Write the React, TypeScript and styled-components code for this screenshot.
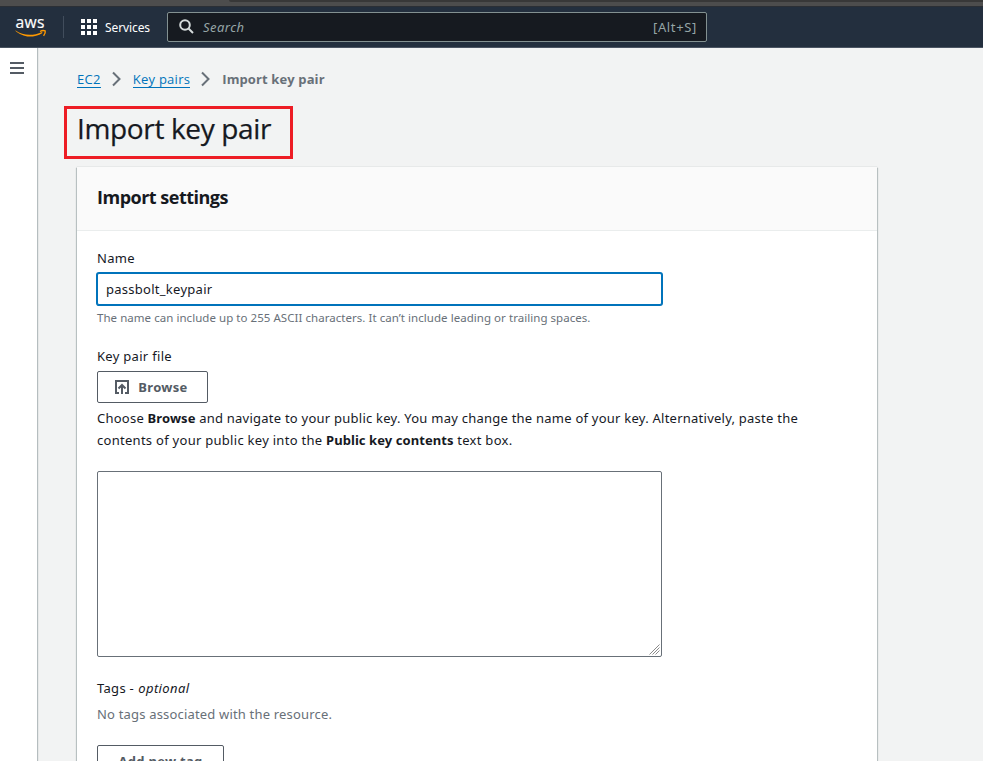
import React from 'react';
import styled, { createGlobalStyle } from 'styled-components';

const Global = createGlobalStyle`
  *, *::before, *::after { box-sizing: border-box; }
  html, body { margin: 0; height: 761px; overflow: hidden; }
  body {
    background: #f2f3f3;
    color: #16191f;
    font: 400 13px/22px "Noto Sans", "Open Sans", sans-serif;
    letter-spacing: 0.25px;
  }
  b { font-weight: 700; letter-spacing: 0.07px; }
`;

const Page = styled.div`
  width: 983px;
  height: 761px;
  display: flex;
  flex-direction: column;
  overflow: hidden;
`;

const BrowserEdge = styled.div`
  height: 7px;
  flex: none;
  background: #4d4d4d;
  border-bottom: 1px solid #2b2f35;
`;

const TabShade = styled.div`
  height: 2px;
  margin-left: 229px;
  background: #383838;
  border-bottom-left-radius: 2px;
`;

const NavBar = styled.header`
  height: 41px;
  flex: none;
  display: flex;
  align-items: center;
  padding: 0 0 1px 14px;
  background: #232f3e;
  border-bottom: 1px solid #4b5563;
  color: #fff;
`;

const NavDivider = styled.div`
  width: 1px;
  height: 22px;
  margin: 0 17px 0 15px;
  background: #414d5c;
`;

const Services = styled.div`
  display: flex;
  align-items: center;
  width: 86px;
  gap: 8px;
  font-size: 12px;
  letter-spacing: -0.1px;
`;

const ServicesLabel = styled.span`
  padding-top: 2px;
`;

const SearchBox = styled.div`
  width: 540px;
  height: 30px;
  display: flex;
  align-items: center;
  padding: 0 10px 0 11px;
  background: #161a20;
  border: 1px solid #839191;
  border-radius: 2px;
  color: #95a5a6;
`;

const SearchHint = styled.span`
  flex: 1;
  margin-left: 9px;
  font-style: italic;
  letter-spacing: 0.45px;
`;

const Shortcut = styled.span`
  letter-spacing: 0.65px;
  margin-right: -1px;
`;

const Main = styled.div`
  flex: 1;
  min-height: 0;
  display: flex;
`;

const Rail = styled.aside`
  width: 37px;
  flex: none;
  padding: 14px 0 0 10px;
  background: #fff;
  box-shadow: 1px 0 1px rgba(0, 28, 36, 0.25);
  svg { display: block; }
`;

const Content = styled.main`
  padding: 20px 0 0 40px;
`;

const Breadcrumbs = styled.nav`
  height: 22px;
  display: flex;
  align-items: center;
  font-family: "Open Sans", sans-serif;
  svg { display: block; }
`;

const Crumb = styled.a`
  height: 18px;
  line-height: 19px;
  letter-spacing: 0.27px;
  color: #0073bb;
  border-bottom: 1px solid #0073bb;
`;

const CurrentCrumb = styled.span`
  color: #687078;
  font-weight: 700;
  letter-spacing: 0.12px;
`;

const TitleFrame = styled.div`
  width: 229px;
  height: 53px;
  margin: 16px 0 8px -13px;
  padding-left: 10px;
  border: 3px solid #ed1c24;
`;

const Title = styled.h1`
  margin: 0;
  font: 400 28px/38px "Open Sans", sans-serif;
  letter-spacing: -0.35px;
  -webkit-text-stroke: 0.25px #16191f;
`;

const Card = styled.section`
  width: 800px;
  background: #fff;
  box-shadow: 0 0 1px rgba(0, 28, 36, 0.25), 1px 1px 1px rgba(0, 28, 36, 0.2), -1px 1px 1px rgba(0, 28, 36, 0.2);
`;

const CardHeader = styled.div`
  height: 64px;
  padding: 18px 20px;
  background: #fafafa;
  border-bottom: 1px solid #eaeded;
`;

const CardTitle = styled.h2`
  margin: 0;
  font: 700 18px/24px "Open Sans", sans-serif;
  letter-spacing: -0.5px;
`;

const CardBody = styled.div`
  height: 650px;
  padding: 16px 20px;
`;

const Label = styled.div`
  letter-spacing: 0.3px;
  em { margin-left: 0.5px; letter-spacing: 0.4px; }
`;

const TextInput = styled.input`
  display: block;
  width: 565px;
  height: 32px;
  margin-top: 4px;
  padding: 0 8px;
  border: 1px solid #0073bb;
  border-radius: 2px;
  box-shadow: 0 0 0 1px #0073bb;
  outline: 0;
  background: #fff;
  color: #16191f;
  font: inherit;
  letter-spacing: 0.27px;
`;

const Constraint = styled.div`
  margin: 5px 0 19px;
  color: #687078;
  font-size: 11.5px;
  line-height: 16px;
  letter-spacing: 0.045px;
`;

const Button = styled.button<{ $width: number }>`
  width: ${(p) => p.$width}px;
  height: 32px;
  display: flex;
  align-items: center;
  justify-content: center;
  gap: 8px;
  padding: 0;
  background: #fff;
  border: 1px solid #545b64;
  border-radius: 2px;
  color: #545b64;
  font: inherit;
  font-weight: 700;
  letter-spacing: 0.3px;
`;

const FileButton = styled(Button)`
  margin-top: 4px;
  padding-right: 2px;
  gap: 9px;
`;

const HelpText = styled.p`
  margin: 4px 0 20px;
`;

const HelpLine = styled.span<{ $spacing: number }>`
  display: block;
  white-space: nowrap;
  letter-spacing: ${(p) => p.$spacing}px;
`;

const KeyAreaFrame = styled.div`
  position: relative;
  width: 565px;
  margin-bottom: 20px;
`;

const KeyArea = styled.textarea`
  display: block;
  width: 100%;
  height: 186px;
  border: 1px solid #687078;
  border-radius: 2px;
  outline: 0;
  background: #fff;
  resize: none;
`;

const Grip = styled.svg`
  position: absolute;
  right: 2px;
  bottom: 2px;
`;

const EmptyTags = styled.div`
  margin: 4px 0 20px;
  color: #687078;
  letter-spacing: 0.18px;
`;

const AwsLogo = () => (
  <svg width="34" height="26" viewBox="0 0 34 26" overflow="visible" aria-label="aws">
    <text x="1.6" y="13.6" fontFamily="Open Sans, sans-serif" fontSize="16" fontWeight="500" fill="#fff" stroke="#fff" strokeWidth="0.2" textLength="29" lengthAdjust="spacingAndGlyphs">aws</text>
    <path d="M1.300 16.800C5 20 10 22.600 15.500 22.600c4.500 0 9-1.200 13-3.700l-.5-1c-4 1.900-8.300 2.900-12.500 2.900-5 0-9.500-1.500-13.900-4.400z" fill="#f90" />
    <path d="M26 17.500c1.800-1 4-1.100 5.200-.6.3 1.300-.3 3.400-1.600 5" fill="none" stroke="#f90" strokeWidth="1.400" />
  </svg>
);

const GridIcon = () => (
  <svg width="16" height="16" viewBox="0 0 16 16" fill="#fff">
    {[0, 6, 12].map((y) => [0, 6, 12].map((x) => <rect key={`${x}-${y}`} x={x} y={y} width="4" height="4" />))}
  </svg>
);

const SearchIcon = () => (
  <svg width="15" height="15" viewBox="0 0 15 15" fill="none" stroke="#d5dbdb" strokeWidth="2">
    <circle cx="6" cy="6" r="4.800" />
    <path d="M9.500 9.500L14 14" />
  </svg>
);

const Chevron = styled.svg`
  margin: 0 12px 0 11px;
  fill: none;
  stroke: #687078;
  stroke-width: 2;
`;

const Separator = () => (
  <Chevron width="9" height="16" viewBox="0 0 9 16"><path d="M1 1.500L7.500 8 1 14.500" /></Chevron>
);

export default function App() {
  return (
    <Page>
      <Global />
      <BrowserEdge><TabShade /></BrowserEdge>
      <NavBar>
        <AwsLogo />
        <NavDivider />
        <Services><GridIcon /><ServicesLabel>Services</ServicesLabel></Services>
        <SearchBox>
          <SearchIcon />
          <SearchHint>Search</SearchHint>
          <Shortcut>[Alt+S]</Shortcut>
        </SearchBox>
      </NavBar>
      <Main>
        <Rail>
          <svg width="14" height="12" viewBox="0 0 14 12" fill="#545b64">
            <path d="M0 0h14v2H0zM0 5h14v2H0zM0 10h14v2H0z" />
          </svg>
        </Rail>
        <Content>
          <Breadcrumbs>
            <Crumb>EC2</Crumb>
            <Separator />
            <Crumb>Key pairs</Crumb>
            <Separator />
            <CurrentCrumb>Import key pair</CurrentCrumb>
          </Breadcrumbs>
          <TitleFrame><Title>Import key pair</Title></TitleFrame>
          <Card>
            <CardHeader><CardTitle>Import settings</CardTitle></CardHeader>
            <CardBody>
              <Label>Name</Label>
              <TextInput defaultValue="passbolt_keypair" spellCheck={false} />
              <Constraint>The name can include up to 255 ASCII characters. It can’t include leading or trailing spaces.</Constraint>
              <Label>Key pair file</Label>
              <FileButton $width={111}>
                <svg width="14" height="14" viewBox="0 0 14 14" fill="none" stroke="#545b64" strokeWidth="2">
                  <path d="M4 13H1V1h12v12h-3M7 14V5M3.500 8.500L7 5l3.500 3.500" />
                </svg>
                Browse
              </FileButton>
              <HelpText>
                <HelpLine $spacing={0.24}>
                  Choose <b>Browse</b> and navigate to your public key. You may change the name of your key. Alternatively, paste the
                </HelpLine>
                <HelpLine $spacing={0.28}>
                  contents of your public key into the <b>Public key contents</b> text box.
                </HelpLine>
              </HelpText>
              <KeyAreaFrame>
                <KeyArea />
                <Grip width="11" height="11" viewBox="0 0 11 11" fill="none" stroke="#8a8a8a" strokeWidth="1">
                  <path d="M0.500 10.500L10.500 0.500M3.500 10.500L10.500 3.500M6.500 10.500L10.500 6.500" />
                </Grip>
              </KeyAreaFrame>
              <Label>Tags - <em>optional</em></Label>
              <EmptyTags>No tags associated with the resource.</EmptyTags>
              <Button $width={127}>Add new tag</Button>
            </CardBody>
          </Card>
        </Content>
      </Main>
    </Page>
  );
}
